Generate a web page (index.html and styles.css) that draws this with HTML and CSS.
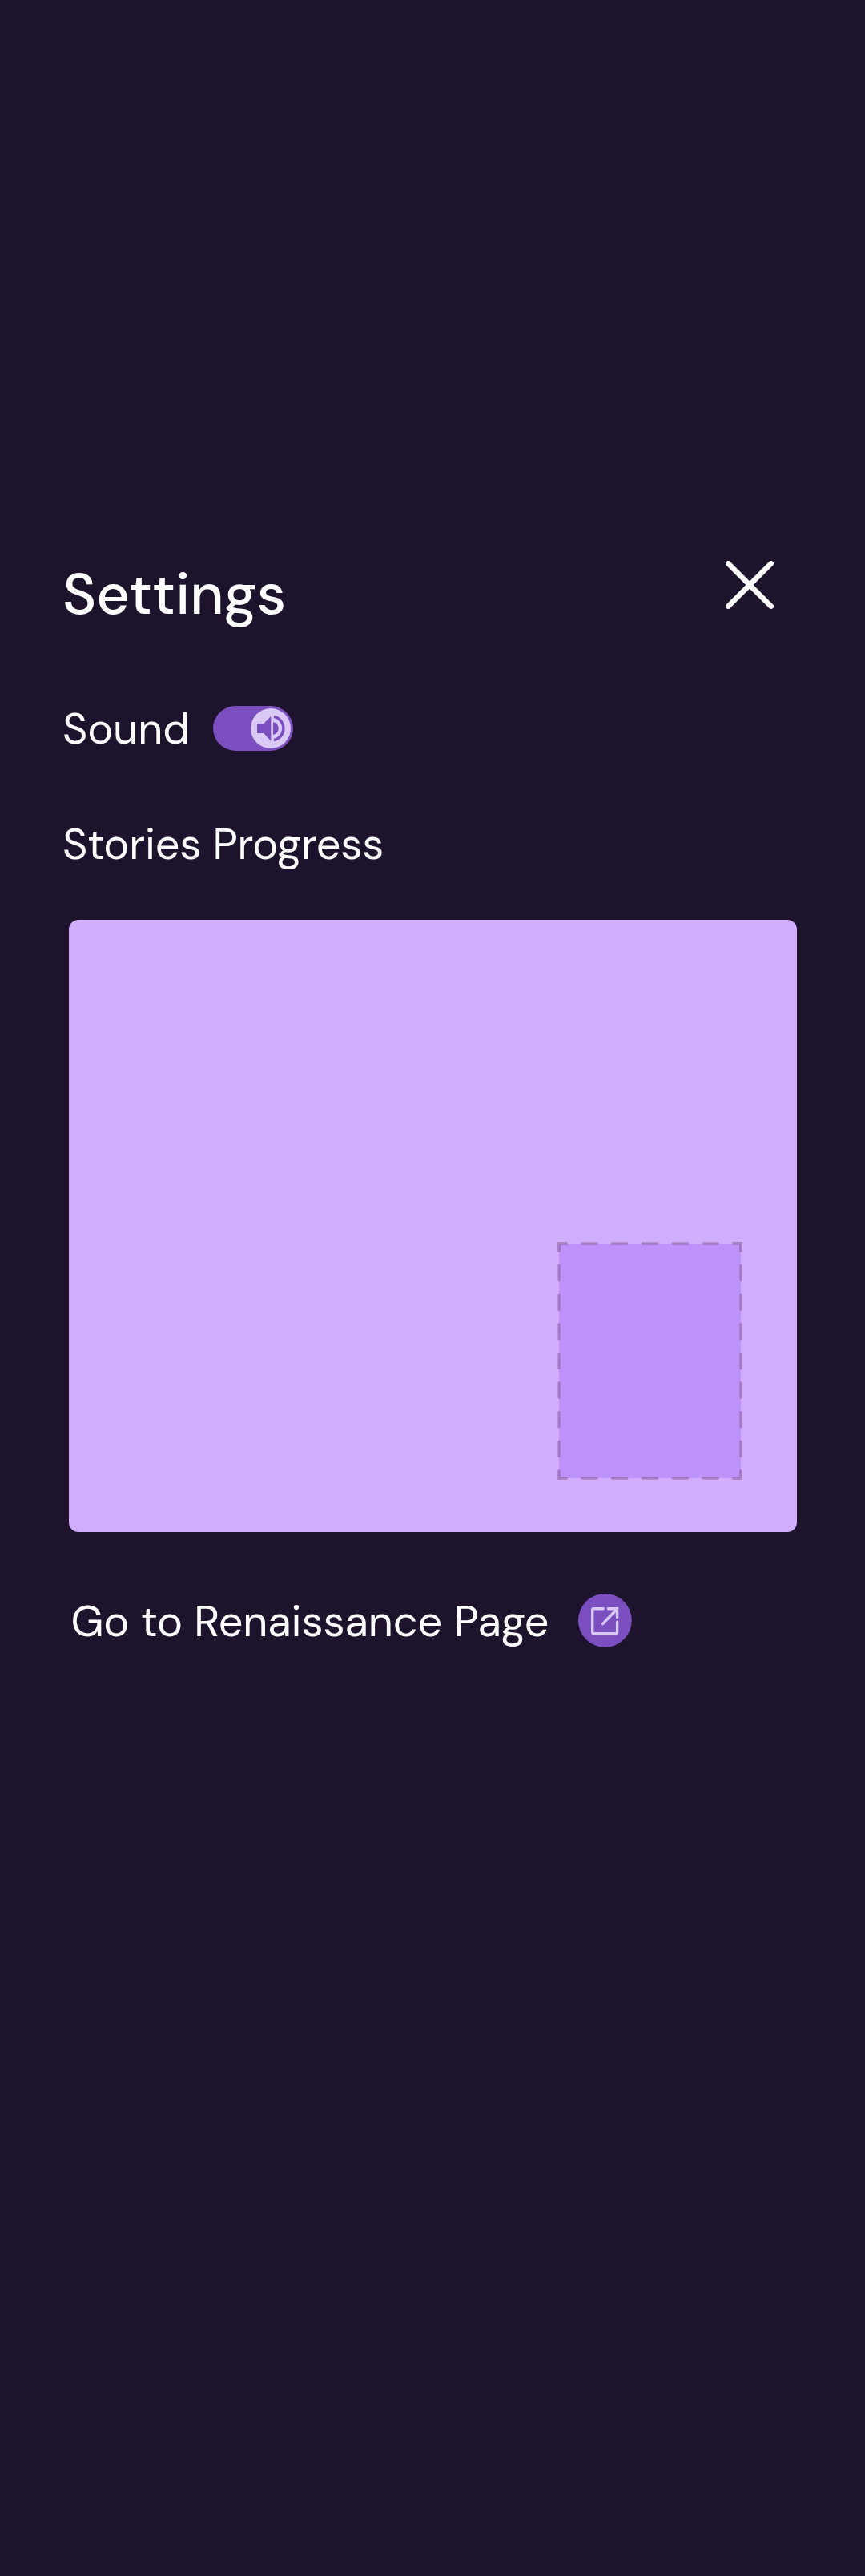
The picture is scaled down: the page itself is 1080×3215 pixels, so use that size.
FILE: index.html
```html
<!DOCTYPE html>
<html lang="en">
<head>
<meta charset="utf-8">
<title>Settings</title>
<link rel="stylesheet" href="styles.css">
</head>
<body>
<main class="settings">
  <header class="header">
    <h1 class="title">Settings</h1>
    <button class="close" aria-label="Close">
      <svg width="60" height="60" viewBox="0 0 60 60"><path d="M3.3 3.3L56.7 56.7M56.7 3.3L3.3 56.7"/></svg>
    </button>
  </header>
  <div class="sound">
    <span class="label label-sound">Sound</span>
    <button class="toggle" aria-label="Sound on">
      <svg class="knob" width="50" height="50" viewBox="0 0 50 50">
        <circle class="knob-face" cx="25" cy="25" r="25"/>
        <path class="speaker" d="M8 19h8.3l9-9.3V41l-9-10.1H8z"/>
        <path class="speaker" d="M28 17.1a8 8 0 0 1 0 15.8z"/>
        <path class="wave" d="M29 10.4a14.9 14.9 0 0 1 0 29.2"/>
      </svg>
    </button>
  </div>
  <h2 class="label label-progress">Stories Progress</h2>
  <section class="board">
    <svg class="slot" width="231" height="297" viewBox="-2 -2 231 297">
      <rect class="slot-fill" width="227" height="293"/>
      <g class="slot-edge">
        <path class="dash-x" d="M0 0H227M0 293H227"/>
        <path class="dash-y" d="M0 0V293M227 0V293"/>
        <path d="M0 9.2V0H9.2M217.8 0H227V9.2M227 283.8V293H217.8M9.2 293H0V283.8"/>
      </g>
    </svg>
  </section>
  <a class="link">
    <span class="label label-link">Go to Renaissance Page</span>
    <svg class="external" width="67" height="67" viewBox="0 0 67 67">
      <circle cx="33.4" cy="33.4" r="33.4"/>
      <path d="M31.3 18.7H19.3Q17.7 18.7 17.7 20.3V48Q17.7 49.6 19.3 49.6H47Q48.6 49.6 48.6 48V35.3"/>
      <path d="M37.4 18.7H48.6V29.6M48.2 19.3L30.6 37.6"/>
    </svg>
  </a>
</main>
</body>
</html>
```
FILE: styles.css
```css
* { box-sizing: border-box; }
body {
  margin: 0;
  background: #1e132c;
  color: #fff;
  font-family: "DM Sans", Inter, sans-serif;
}
button { padding: 0; border: 0; background: none; }
svg { display: block; flex: none; }
.settings {
  display: flex;
  flex-direction: column;
  min-height: 3215px;
  padding: 695px 85px 0 78px;
}
.header {
  display: flex;
  justify-content: space-between;
  height: 93px;
  padding-right: 29px;
}
.title {
  margin: 0;
  font-size: 72px;
  font-weight: 500;
  line-height: 93px;
}
.close { height: 60px; margin-top: 5px; }
.close path { stroke: #fff; stroke-width: 6.6; stroke-linecap: round; }
.label {
  margin: 0;
  font-size: 54px;
  font-weight: 400;
  line-height: 71px;
  white-space: nowrap;
}
.sound { display: flex; align-items: center; height: 71px; margin-top: 86px; }
.label-sound { width: 188px; }
.toggle {
  display: flex;
  align-items: center;
  justify-content: flex-end;
  width: 99.5px;
  height: 55.6px;
  margin-bottom: 1px;
  padding-right: 2.5px;
  border-radius: 28px;
  background: #7b4fc0;
}
.knob-face { fill: #dac8f6; }
.speaker { fill: #7b4fc0; }
.wave { fill: none; stroke: #7b4fc0; stroke-width: 3.5; }
.label-progress { margin-top: 73px; letter-spacing: -0.18px; }
.board {
  display: flex;
  align-items: flex-end;
  justify-content: flex-end;
  width: 908.5px;
  height: 764px;
  margin: 59px 0 0 8px;
  padding: 0 67.5px 65px 0;
  border-radius: 12px;
  background: #d0aefc;
}
.slot { overflow: visible; }
.slot-fill { fill: #be92fb; }
.slot-edge { fill: none; stroke: #865690; stroke-width: 3.3; stroke-linecap: round; opacity: .5; }
.dash-x { stroke-dasharray: 18.4 19.433; stroke-dashoffset: 9.2; }
.dash-y { stroke-dasharray: 18.4 18.225; stroke-dashoffset: 9.2; }
.link { display: flex; align-items: center; height: 71px; margin: 76px 0 0 10.5px; }
.label-link { width: 633.5px; letter-spacing: -0.06px; }
.external { margin-bottom: 1.6px; }
.external circle { fill: #7b4fc0; }
.external path { fill: none; stroke: #dac8f6; stroke-width: 3.4; stroke-linecap: round; }
```
